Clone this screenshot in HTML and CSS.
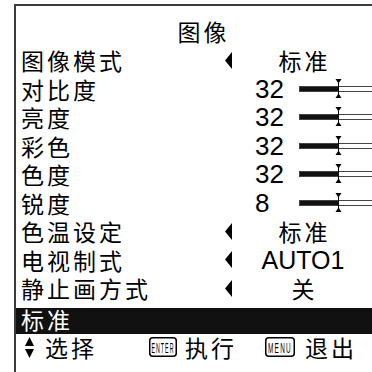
FILE: index.html
```html
<!DOCTYPE html>
<html lang="zh">
<head>
<meta charset="utf-8">
<link rel="stylesheet" href="styles.css">
</head>
<body>
<div class="frame">
  <div class="title">图像</div>
  <div class="row">
    <span class="label">图像模式</span>
    <span class="arrow"><svg width="7" height="17" viewBox="0 0 7 17"><polygon points="7,0 0,8.5 7,17" fill="#000"/></svg></span>
    <span class="value">标准</span>
  </div>
  <div class="row">
    <span class="label wide">对比度</span>
    <span class="number">32</span>
    <span class="bar"><span class="fill"></span><svg class="marker" width="7" height="19" viewBox="0 0 7 19"><polygon points="0.5,0 6.5,0 3.5,4.5" fill="#000"/><rect x="3" y="4" width="1" height="11" fill="#000"/><polygon points="0.5,19 6.5,19 3.5,14.5" fill="#000"/></svg></span>
  </div>
  <div class="row">
    <span class="label wide">亮度</span>
    <span class="number">32</span>
    <span class="bar"><span class="fill"></span><svg class="marker" width="7" height="19" viewBox="0 0 7 19"><polygon points="0.5,0 6.5,0 3.5,4.5" fill="#000"/><rect x="3" y="4" width="1" height="11" fill="#000"/><polygon points="0.5,19 6.5,19 3.5,14.5" fill="#000"/></svg></span>
  </div>
  <div class="row">
    <span class="label wide">彩色</span>
    <span class="number">32</span>
    <span class="bar"><span class="fill"></span><svg class="marker" width="7" height="19" viewBox="0 0 7 19"><polygon points="0.5,0 6.5,0 3.5,4.5" fill="#000"/><rect x="3" y="4" width="1" height="11" fill="#000"/><polygon points="0.5,19 6.5,19 3.5,14.5" fill="#000"/></svg></span>
  </div>
  <div class="row">
    <span class="label wide">色度</span>
    <span class="number">32</span>
    <span class="bar"><span class="fill"></span><svg class="marker" width="7" height="19" viewBox="0 0 7 19"><polygon points="0.5,0 6.5,0 3.5,4.5" fill="#000"/><rect x="3" y="4" width="1" height="11" fill="#000"/><polygon points="0.5,19 6.5,19 3.5,14.5" fill="#000"/></svg></span>
  </div>
  <div class="row">
    <span class="label wide">锐度</span>
    <span class="number">8</span>
    <span class="bar"><span class="fill"></span><svg class="marker" width="7" height="19" viewBox="0 0 7 19"><polygon points="0.5,0 6.5,0 3.5,4.5" fill="#000"/><rect x="3" y="4" width="1" height="11" fill="#000"/><polygon points="0.5,19 6.5,19 3.5,14.5" fill="#000"/></svg></span>
  </div>
  <div class="row">
    <span class="label">色温设定</span>
    <span class="arrow"><svg width="7" height="17" viewBox="0 0 7 17"><polygon points="7,0 0,8.5 7,17" fill="#000"/></svg></span>
    <span class="value">标准</span>
  </div>
  <div class="row">
    <span class="label">电视制式</span>
    <span class="arrow"><svg width="7" height="17" viewBox="0 0 7 17"><polygon points="7,0 0,8.5 7,17" fill="#000"/></svg></span>
    <span class="value latin">AUTO1</span>
  </div>
  <div class="row">
    <span class="label">静止画方式</span>
    <span class="arrow"><svg width="7" height="17" viewBox="0 0 7 17"><polygon points="7,0 0,8.5 7,17" fill="#000"/></svg></span>
    <span class="value">关</span>
  </div>
  <div class="row highlight">
    <span class="label">标准</span>
  </div>
  <div class="footer">
    <svg class="updown" width="9" height="21" viewBox="0 0 9 21"><polygon points="4.5,0 9,9 0,9" fill="#000"/><polygon points="0,12 9,12 4.5,21" fill="#000"/></svg>
    <span class="ftext select">选择</span>
    <svg class="key enter" width="28" height="20" viewBox="0 0 28 20"><rect x="0.75" y="0.75" width="26.5" height="18.5" rx="3" fill="#fff" stroke="#000" stroke-width="1.5"/><text x="14" y="15.5" text-anchor="middle" font-family="Liberation Sans, sans-serif" font-size="15" textLength="23" lengthAdjust="spacingAndGlyphs">ENTER</text></svg>
    <span class="ftext exec">执行</span>
    <svg class="key menu" width="30" height="20" viewBox="0 0 30 20"><rect x="0.75" y="0.75" width="28.5" height="18.5" rx="3" fill="#fff" stroke="#000" stroke-width="1.5"/><text x="15" y="15.5" text-anchor="middle" font-family="Liberation Sans, sans-serif" font-size="15" textLength="24" lengthAdjust="spacingAndGlyphs">MENU</text></svg>
    <span class="ftext quit">退出</span>
  </div>
</div>
</body>
</html>
```

FILE: styles.css
```css
html, body {
  margin: 0;
  padding: 0;
  overflow: hidden;
  background: #fff;
}

.frame {
  margin: 4px 0 0 14px;
  width: 372px;
  padding-bottom: 30px;
  border: 2px solid #3c3c3c;
  font-family: "Noto Sans CJK SC", "Liberation Sans", sans-serif;
  font-size: 23px;
  letter-spacing: 3px;
  color: #000;
}

.title {
  height: 45px;
  box-sizing: border-box;
  padding-top: 11px;
  line-height: 28px;
  text-align: center;
  text-indent: 3px;
}

.row {
  height: 28.5px;
  box-sizing: border-box;
  display: flex;
  align-items: center;
  padding-left: 5px;
  padding-bottom: 10px;
  line-height: 28px;
  white-space: nowrap;
}

.label {
  width: 204px;
  flex: none;
}

.label.wide {
  width: 234px;
}

.arrow {
  width: 7px;
  flex: none;
  display: flex;
  align-items: center;
}

.value {
  width: 142px;
  flex: none;
  text-align: center;
  text-indent: 3px;
}

.value.latin {
  font-family: "Liberation Sans", sans-serif;
  font-size: 25px;
  letter-spacing: 0;
  text-indent: 0;
}

.number {
  width: 44px;
  flex: none;
  font-family: "Liberation Sans", sans-serif;
  font-size: 26px;
  letter-spacing: 0;
}

.bar {
  position: relative;
  width: 80px;
  height: 6px;
  flex: none;
  box-sizing: border-box;
  border: 1px solid #444;
  background: #fff;
}

.fill {
  display: block;
  width: 38px;
  height: 100%;
  background: #111;
}

.marker {
  position: absolute;
  left: 35px;
  top: -8px;
}

.highlight {
  height: 26px;
  padding-bottom: 4px;
  background: #111;
  color: #fff;
}

.footer {
  height: 31px;
  box-sizing: border-box;
  padding-bottom: 4px;
  display: flex;
  align-items: center;
  white-space: nowrap;
  line-height: 28px;
}

.updown {
  margin-left: 9px;
  flex: none;
}

.select {
  margin-left: 11px;
}

.key {
  flex: none;
}

.enter {
  margin-left: 52px;
}

.exec {
  margin-left: 8px;
}

.menu {
  margin-left: 28px;
}

.quit {
  margin-left: 10px;
}
```
